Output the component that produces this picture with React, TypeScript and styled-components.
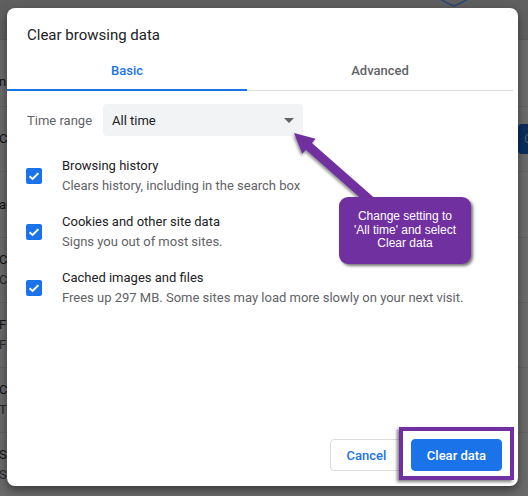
import React from "react";
import styled, { createGlobalStyle } from "styled-components";

const GlobalStyle = createGlobalStyle`
  html, body { margin: 0; padding: 0; }
  body {
    background: #5f5f5f;
    font-family: Roboto, "Noto Sans", Arial, sans-serif;
  }
  * { box-sizing: border-box; }
`;

/* ---------- screen & dimmed settings page behind the modal ---------- */

const Screen = styled.div`
  position: relative;
  width: 528px;
  height: 496px;
  overflow: hidden;
  background: #6a6a6a;
`;

const PageUnder = styled.div`
  display: flex;
  flex-direction: column;
  height: 100%;
`;

const TopBar = styled.div`
  height: 40px;
  flex: none;
  display: flex;
  justify-content: flex-end;
  padding-right: 56px;
  background: #5f5f5f;
  border-bottom: 1px solid #595959;
`;

const ShieldTip = styled.svg`
  display: block;
  margin-top: -4px;
`;

const SettingRow = styled.div<{ $h: number; $align?: string }>`
  height: ${(p) => p.$h}px;
  flex: none;
  display: flex;
  align-items: ${(p) => p.$align ?? "center"};
  justify-content: space-between;
  border-bottom: 1px solid #5f5f5f;
  white-space: nowrap;
`;

/* only the first letters of each row peek out beside the modal */
const RowTexts = styled.div`
  width: 8px;
  overflow: hidden;
  display: flex;
  flex-direction: column;
  font-size: 13px;
  line-height: 20px;
  margin-left: -1px;
`;

const RowTitle = styled.span`
  color: #101112;
`;

const RowSub = styled.span`
  color: #26282a;
`;

const DimButton = styled.span`
  flex: none;
  width: 10px;
  height: 30px;
  border-radius: 4px 0 0 4px;
  background: #0a2e5d;
  color: #4a5a70;
  font-size: 13px;
  line-height: 30px;
  padding-left: 6px;
  overflow: hidden;
`;

/* ---------- modal dialog ---------- */

const Dialog = styled.div`
  position: absolute;
  left: 7px;
  top: 8px;
  width: 511px;
  height: 478px;
  background: #fff;
  border-radius: 8px;
  box-shadow: 0 4px 10px rgba(0, 0, 0, 0.45);
  display: flex;
  flex-direction: column;
`;

const Title = styled.h2`
  margin: 0;
  padding: 17px 20px 0;
  font-size: 15px;
  line-height: 20px;
  font-weight: 400;
  color: #202124;
`;

const TabList = styled.div`
  margin-top: 6px;
  width: 506px;
  display: flex;
  border-bottom: 1px solid #dadce0;
`;

const Tab = styled.div<{ $active?: boolean; $w?: number }>`
  position: relative;
  height: 39px;
  ${(p) => (p.$w ? `width: ${p.$w}px; flex: none;` : "flex: 1;")}
  display: flex;
  align-items: center;
  justify-content: center;
  font-size: 13px;
  font-weight: 500;
  color: ${(p) => (p.$active ? "#1a73e8" : "#5f6368")};

  &::after {
    content: "";
    position: absolute;
    left: 0;
    right: 0;
    bottom: -1px;
    height: 2px;
    background: ${(p) => (p.$active ? "#1a73e8" : "transparent")};
  }
`;

const Body = styled.div`
  padding-top: 13px;
  display: flex;
  flex-direction: column;
`;

const RangeRow = styled.div`
  display: flex;
  align-items: center;
  padding-left: 20px;
`;

const RangeLabel = styled.span`
  width: 76px;
  font-size: 13px;
  color: #5f6368;
`;

const Select = styled.div`
  width: 200px;
  height: 32px;
  border-radius: 4px;
  background: #f1f3f4;
  display: flex;
  align-items: center;
  justify-content: space-between;
  padding: 0 9px 0 9px;
  font-size: 13px;
  color: #202124;
`;

const Caret = styled.span`
  width: 0;
  height: 0;
  border-left: 5px solid transparent;
  border-right: 5px solid transparent;
  border-top: 5px solid #5f6368;
`;

const Options = styled.div`
  margin-top: 20px;
  display: flex;
  flex-direction: column;
  gap: 16px;
`;

const Option = styled.label`
  display: flex;
  align-items: center;
  gap: 20px;
  padding-left: 19px;
  height: 40px;
`;

const Box = styled.span`
  flex: none;
  width: 16px;
  height: 16px;
  border-radius: 2px;
  background: #1a73e8;
  display: flex;
  align-items: center;
  justify-content: center;
`;

const OptionText = styled.div`
  display: flex;
  flex-direction: column;
  font-size: 13px;
  line-height: 20px;
`;

const OptionTitle = styled.span`
  color: #202124;
`;

const OptionSub = styled.span`
  color: #5f6368;
`;

const Footer = styled.div`
  margin-top: auto;
  padding: 0 16px 15px;
  display: flex;
  justify-content: flex-end;
  gap: 8px;
`;

const Button = styled.button<{ $primary?: boolean }>`
  height: 32px;
  width: ${(p) => (p.$primary ? 91 : 73)}px;
  border-radius: 4px;
  font-family: inherit;
  font-size: 13px;
  font-weight: 500;
  cursor: pointer;
  border: 1px solid ${(p) => (p.$primary ? "#1a73e8" : "#dadce0")};
  background: ${(p) => (p.$primary ? "#1a73e8" : "#fff")};
  color: ${(p) => (p.$primary ? "#fff" : "#1a73e8")};
`;

/* ---------- annotation layer ---------- */

const Pointer = styled.svg`
  position: absolute;
  left: 285px;
  top: 125px;
  overflow: visible;
  filter: drop-shadow(-1px 2px 1.5px rgba(0, 0, 0, 0.45));
`;

const Callout = styled.div`
  position: absolute;
  left: 339px;
  top: 197px;
  width: 132px;
  height: 67px;
  border-radius: 9px;
  background: #7030a0;
  box-shadow: 2px 2px 3px rgba(0, 0, 0, 0.55);
  display: flex;
  align-items: center;
  justify-content: center;
  text-align: center;
  font-family: "Liberation Sans", Arial, sans-serif;
  font-size: 12px;
  line-height: 13.4px;
  color: #fff;
`;

const HighlightFrame = styled.div`
  position: absolute;
  left: 399px;
  top: 427px;
  width: 115px;
  height: 53px;
  border: 4px solid #7030a0;
  box-shadow: -2px 2px 3px rgba(0, 0, 0, 0.5);
  pointer-events: none;
`;

const Check = () => (
  <svg width="12" height="12" viewBox="0 0 12 12">
    <path d="M1.6 6.2 L4.6 9 L10.4 3.2" fill="none" stroke="#fff" strokeWidth="1.9" />
  </svg>
);

const options = [
  { title: "Browsing history", sub: "Clears history, including in the search box" },
  { title: "Cookies and other site data", sub: "Signs you out of most sites." },
  {
    title: "Cached images and files",
    sub: "Frees up 297 MB. Some sites may load more slowly on your next visit.",
  },
];

export default function App() {
  return (
    <>
      <GlobalStyle />
      <Screen>
        <PageUnder>
          <TopBar>
            <ShieldTip width="36" height="12" viewBox="0 0 36 12">
              <path d="M1 1 Q8 6 18 10 Q28 6 35 1" fill="none" stroke="#2c4672" strokeWidth="1.6" />
            </ShieldTip>
          </TopBar>
          <SettingRow $h={67} $align="flex-end">
            <RowTexts style={{ marginBottom: 14 }}>
              <RowTitle>nline protection</RowTitle>
            </RowTexts>
          </SettingRow>
          <SettingRow $h={65}>
            <RowTexts>
              <RowTitle>Chrome can help keep you safe from data breaches</RowTitle>
            </RowTexts>
            <DimButton>C</DimButton>
          </SettingRow>
          <SettingRow $h={66}>
            <RowTexts>
              <RowTitle>are checked for safety</RowTitle>
            </RowTexts>
          </SettingRow>
          <SettingRow $h={65}>
            <RowTexts>
              <RowTitle>Clear browsing data</RowTitle>
              <RowSub>Clear history, cookies, cache, and more</RowSub>
            </RowTexts>
          </SettingRow>
          <SettingRow $h={65}>
            <RowTexts>
              <RowTitle>First-party sets</RowTitle>
              <RowSub>Fine-tune related site groups</RowSub>
            </RowTexts>
          </SettingRow>
          <SettingRow $h={65}>
            <RowTexts>
              <RowTitle>Cookies and other site data</RowTitle>
              <RowSub>Third-party cookies are blocked in Incognito mode</RowSub>
            </RowTexts>
          </SettingRow>
          <SettingRow $h={65}>
            <RowTexts>
              <RowTitle>Security</RowTitle>
              <RowSub>Safe Browsing and other security settings</RowSub>
            </RowTexts>
          </SettingRow>
        </PageUnder>

        <Dialog>
          <Title>Clear browsing data</Title>
          <TabList>
            <Tab $active $w={240}>Basic</Tab>
            <Tab>Advanced</Tab>
          </TabList>
          <Body>
            <RangeRow>
              <RangeLabel>Time range</RangeLabel>
              <Select>
                <span>All time</span>
                <Caret />
              </Select>
            </RangeRow>
            <Options>
              {options.map((o) => (
                <Option key={o.title}>
                  <Box>
                    <Check />
                  </Box>
                  <OptionText>
                    <OptionTitle>{o.title}</OptionTitle>
                    <OptionSub>{o.sub}</OptionSub>
                  </OptionText>
                </Option>
              ))}
            </Options>
          </Body>
          <Footer>
            <Button>Cancel</Button>
            <Button $primary>Clear data</Button>
          </Footer>
        </Dialog>

        <Pointer width="100" height="90" viewBox="0 0 100 90">
          <polygon
            points="9,8 30.6,13.8 26.9,17.9 90,73.6 84,80.4 20.9,24.7 17.3,28.8"
            fill="#7030a0"
          />
        </Pointer>
        <Callout>
          Change setting to
          <br />
          'All time' and select
          <br />
          Clear data
        </Callout>
        <HighlightFrame />
      </Screen>
    </>
  );
}
